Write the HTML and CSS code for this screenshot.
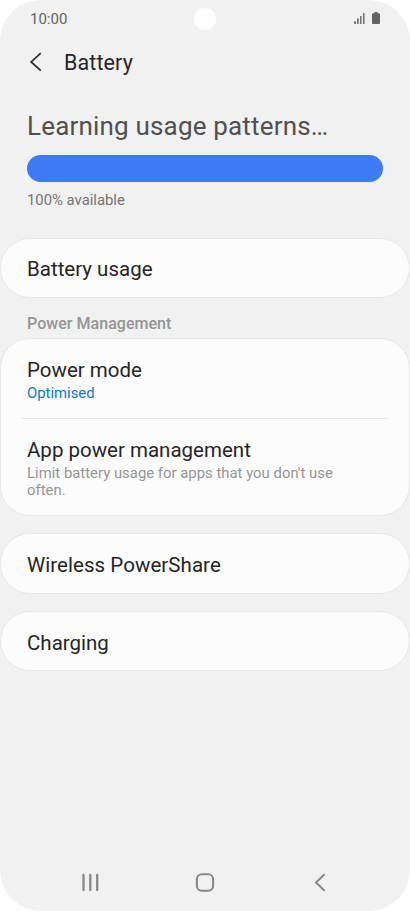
FILE: index.html
```html
<!DOCTYPE html>
<html lang="en">
<head>
<meta charset="utf-8">
<title>Battery</title>
<link rel="stylesheet" href="styles.css">
</head>
<body>
<div class="phone">
  <header class="status">
    <span class="time">10:00</span>
    <svg class="status-icons" width="28" height="14" viewBox="0 0 28 14">
      <g fill="#777"><rect x="0" y="9.3" width="2" height="2.7"/><rect x="3" y="6.5" width="1.8" height="5.5"/><rect x="6" y="4" width="1.6" height="8"/><rect x="9" y="1" width="1.6" height="11"/></g>
      <path fill="#636363" d="M20.5 0h3v1.3h1.500q1 0 1 1V11q0 1-1 1h-6q-1 0-1-1V2.300q0-1 1-1h1.500z"/>
    </svg>
    <span class="camera"></span>
  </header>
  <div class="titlebar">
    <svg class="back" width="14" height="20" viewBox="0 0 14 20"><path d="M11.800 1.200 2.200 9.900l9.600 8.700" fill="none" stroke="#303030" stroke-width="1.8"/></svg>
    <h1>Battery</h1>
  </div>
  <section class="summary">
    <h2>Learning usage patterns…</h2>
    <div class="bar"></div>
    <p>100% available</p>
  </section>
  <main>
    <section class="card single"><h3>Battery usage</h3></section>
    <h4>Power Management</h4>
    <section class="card group">
      <div class="row mode"><h3>Power mode</h3><p class="blue">Optimised</p></div>
      <div class="row apps"><h3>App power management</h3><p class="hint">Limit battery usage for apps that you don't use<br>often.</p></div>
    </section>
    <section class="card single tall"><h3 class="wide">Wireless PowerShare</h3></section>
    <section class="card single low"><h3>Charging</h3></section>
  </main>
  <nav>
    <svg width="20" height="20" viewBox="0 0 20 20"><path d="M3.500 3v15M10.300 3v15M17.200 3v15" stroke="#888" stroke-width="2.300" stroke-linecap="round"/></svg>
    <svg width="20" height="20" viewBox="0 0 20 20"><rect x="1.900" y="2.300" width="16.200" height="16.400" rx="4.800" fill="none" stroke="#888" stroke-width="2.100"/></svg>
    <svg width="20" height="20" viewBox="0 0 20 20"><path d="M14 2.800 6 10.500l8 7.700" fill="none" stroke="#888" stroke-width="2" stroke-linecap="round"/></svg>
  </nav>
</div>
</body>
</html>
```
FILE: styles.css
```css
* { box-sizing: border-box; }
body { margin: 0; background: #fff; font-family: Roboto, "Liberation Sans", sans-serif; }
h1, h2, h3, h4, p { margin: 0; font-weight: 400; white-space: nowrap; }
svg { display: block; flex: none; }
.phone { position: relative; display: flex; flex-direction: column; width: 410px; height: 911px; background: #f1f1f1; border-radius: 41px; overflow: hidden; }
.status { height: 38px; padding: 0 28px 0 30px; display: flex; justify-content: space-between; align-items: center; }
.time { font-size: 15px; color: #636363; }
.camera { position: absolute; left: 194px; top: 8px; width: 22px; height: 22px; border-radius: 50%; background: #fff; }
.titlebar { height: 48px; padding-left: 29px; display: flex; align-items: center; }
h1 { margin-left: 21px; padding-top: 2px; font-size: 21.5px; line-height: 26px; color: #262626; letter-spacing: .1px; }
.summary { height: 152px; padding: 24px 27px 0; }
h2 { font-size: 26px; line-height: 32px; color: #505050; letter-spacing: .18px; }
.bar { height: 27.5px; margin-top: 12.5px; border-radius: 14px; background: #3e7bf7; }
.summary p { margin-top: 8px; font-size: 14.85px; line-height: 20px; color: #757575; }
.card { background: #fcfcfc; border: 1px solid #e7e7e7; border-radius: 30px; }
.single { height: 60px; padding: 2px 0 0 26px; display: flex; align-items: center; margin-bottom: 18px; }
.low { padding-top: 4px; }
.tall { height: 61px; margin-bottom: 17px; }
h3 { font-size: 20.5px; line-height: 26px; color: #252525; }
.wide { letter-spacing: .05px; }
h4 { font-size: 16px; line-height: 24px; padding-left: 27px; height: 26px; margin-top: -4px; font-weight: 500; color: #949494; letter-spacing: .04px; }
.group { height: 178px; margin-bottom: 17px; padding: 0 21px; }
.row { padding-left: 5px; }
.mode { height: 80px; padding-top: 18px; border-bottom: 1px solid #e6e6e6; }
.apps { padding-top: 18px; }
.row p { font-size: 14.85px; line-height: 17px; margin-top: 2px; }
.blue { color: #0b78d6; }
.row .hint { color: #959595; letter-spacing: .02px; }
nav { margin-top: auto; height: 58px; padding: 19px 80px 0; display: flex; justify-content: space-between; }
```
